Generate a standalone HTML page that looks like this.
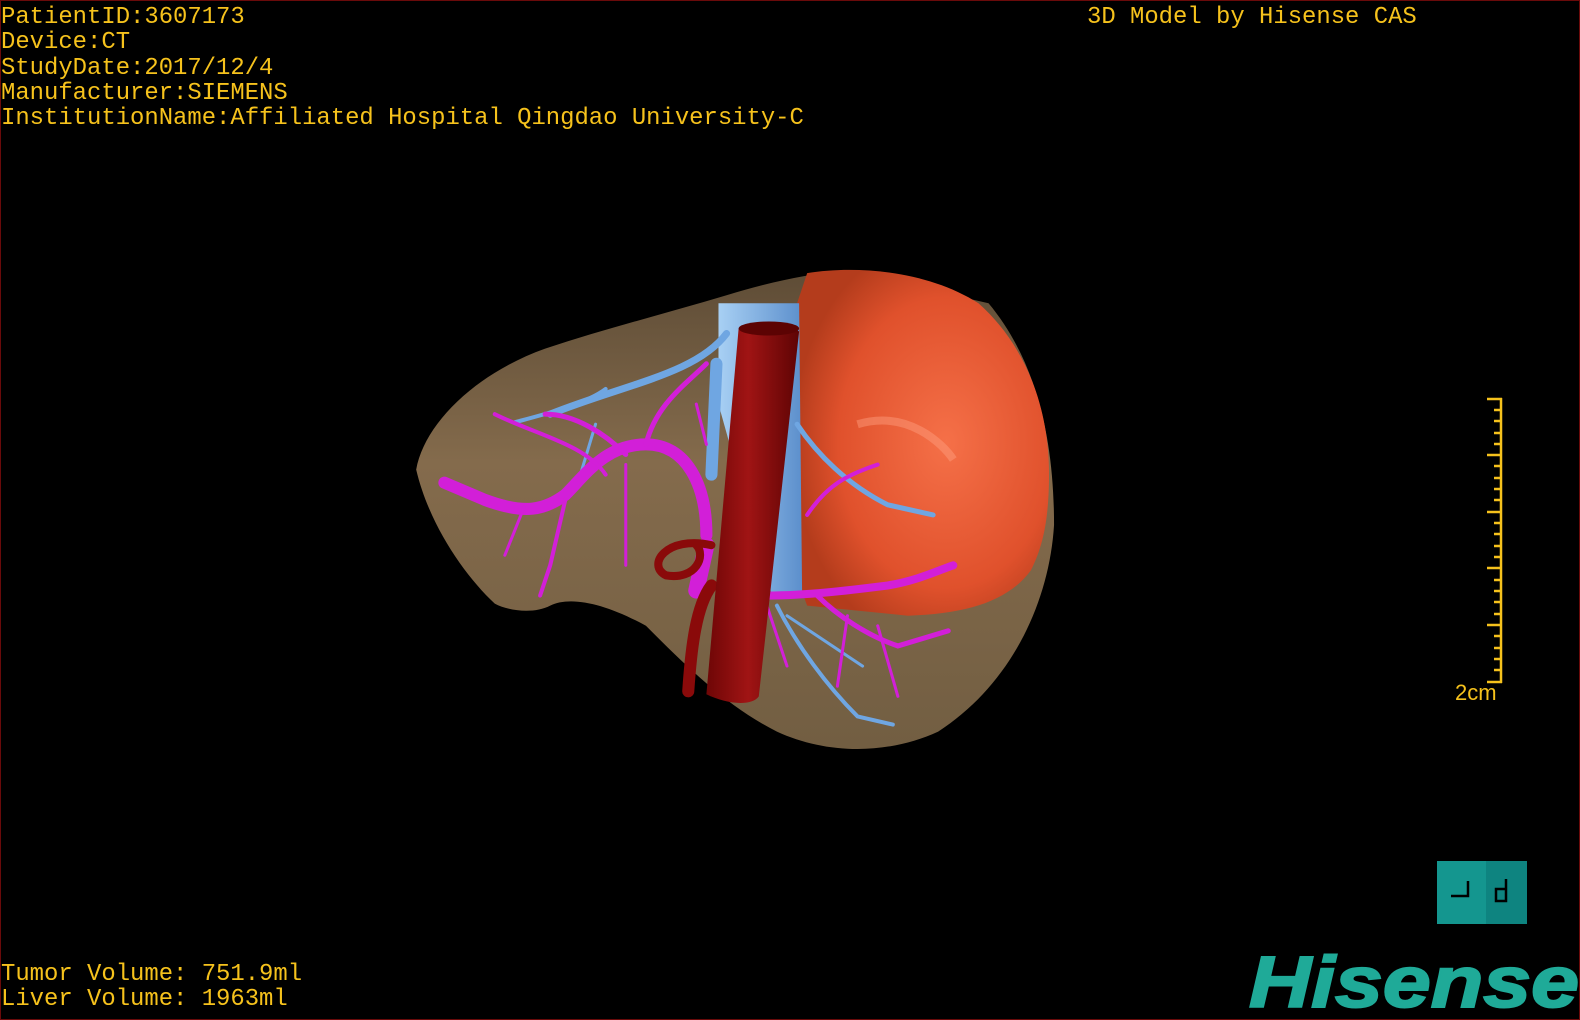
<!DOCTYPE html>
<html><head><meta charset="utf-8"><style>
html,body{margin:0;padding:0;background:#000;}
#s{position:relative;width:1580px;height:1020px;background:#000;overflow:hidden;box-sizing:border-box;border:1px solid #6a0a0a;}
.t{position:absolute;color:#f6c21c;font-family:"Liberation Mono",monospace;font-size:23.9px;line-height:25.3px;white-space:pre;letter-spacing:0;}
</style></head><body><div id="s">
<div class="t" style="left:0;top:4px">PatientID:3607173
Device:CT
StudyDate:2017/12/4
Manufacturer:SIEMENS
InstitutionName:Affiliated Hospital Qingdao University-C</div>
<div class="t" style="left:1086px;top:4px">3D Model by Hisense CAS</div>
<div class="t" style="left:0;top:961px">Tumor Volume: 751.9ml
Liver Volume: 1963ml</div>
<svg width="1580" height="1020" style="position:absolute;left:0;top:0">
<defs>
<radialGradient id="tum" cx="0.6" cy="0.5" r="0.6"><stop offset="0" stop-color="#f57048"/><stop offset="0.7" stop-color="#e0512c"/><stop offset="1" stop-color="#b43c1c"/></radialGradient>
<linearGradient id="liv" x1="0" y1="0" x2="0" y2="1"><stop offset="0" stop-color="#5e4c36"/><stop offset="0.4" stop-color="#846b4c"/><stop offset="1" stop-color="#725e42"/></linearGradient>
<linearGradient id="ivc" x1="0" y1="0" x2="1" y2="0"><stop offset="0" stop-color="#a8d0f4"/><stop offset="1" stop-color="#5c8fcc"/></linearGradient>
<linearGradient id="ao" x1="0" y1="0" x2="1" y2="0"><stop offset="0" stop-color="#6e0606"/><stop offset="0.45" stop-color="#a01414"/><stop offset="1" stop-color="#5e0404"/></linearGradient>
</defs>
<g transform="scale(1.0077)">
<path d="M412,465 C420,420 470,370 540,345 C600,325 660,310 720,292 C760,280 800,270 840,268 L980,300 C1030,360 1045,440 1045,520 C1040,600 1000,680 930,725 C880,748 820,748 770,725 C720,700 680,660 640,620 C600,598 565,590 545,600 C530,608 505,606 490,598 C460,570 425,520 412,465 Z" fill="url(#liv)"/>
<path d="M800,270 C850,262 920,268 970,300 C1015,340 1040,400 1040,470 C1040,520 1032,545 1022,565 C1000,595 960,608 900,610 L800,600 L785,560 L790,300 Z" fill="url(#tum)"/>
<path d="M850,420 C900,405 935,440 945,455" stroke="#ffa080" stroke-width="8" fill="none" opacity="0.45"/>
<path d="M712,300 L792,300 L795,590 L765,590 L712,400 Z" fill="url(#ivc)"/>
<g stroke="#6fa6e2" fill="none" stroke-linecap="round">
<path d="M720,330 C690,370 620,380 545,410" stroke-width="7"/>
<path d="M600,385 C580,400 540,410 510,418" stroke-width="4"/>
<path d="M710,360 L705,470" stroke-width="12"/>
<path d="M790,420 C810,450 840,480 880,500 L925,510" stroke-width="5"/>
<path d="M770,600 C790,640 820,680 850,710 L885,718" stroke-width="4"/>
<path d="M780,610 L855,660" stroke-width="3"/>
<path d="M590,420 L575,470" stroke-width="3"/>
</g>
<g stroke="#d21fd8" fill="none" stroke-linecap="round">
<path d="M700,530 C700,480 680,440 640,440 C600,440 580,470 560,490 C540,505 520,510 480,495 L440,478" stroke-width="12"/>
<path d="M700,540 L690,585" stroke-width="16"/>
<path d="M620,450 C600,430 570,410 540,410" stroke-width="5"/>
<path d="M640,440 C650,400 680,380 700,360" stroke-width="5"/>
<path d="M600,470 C580,440 530,430 490,410" stroke-width="4"/>
<path d="M560,495 L545,560 L535,590" stroke-width="4"/>
<path d="M520,500 L500,550" stroke-width="3"/>
<path d="M620,460 L620,560" stroke-width="3"/>
<path d="M760,590 C800,590 840,585 880,580 C910,575 930,565 945,560" stroke-width="8"/>
<path d="M810,590 C830,610 860,630 890,640 L940,625" stroke-width="5"/>
<path d="M760,600 L780,660" stroke-width="3"/>
<path d="M840,610 L830,680" stroke-width="3"/>
<path d="M870,620 L890,690" stroke-width="3"/>
<path d="M800,510 C820,480 840,470 870,460" stroke-width="4"/>
<path d="M700,440 L690,400" stroke-width="3"/>
</g>
<g stroke="#8a0a0a" fill="none" stroke-linecap="round">
<path d="M705,540 C660,530 640,560 660,570 C690,575 700,550 690,540" stroke-width="8"/>
<path d="M705,580 C690,600 685,640 682,685" stroke-width="12"/>
</g>
<path d="M732,325 C745,318 780,318 792,328 L752,690 C745,700 720,698 700,688 Z" fill="url(#ao)"/>
<ellipse cx="762" cy="325" rx="30" ry="7" fill="#5c0303"/>
</g>
<g stroke="#f6c21c" stroke-width="2.5">
<line x1="1500" y1="397" x2="1500" y2="682"/>
<line x1="1486" y1="398" x2="1501" y2="398"/><line x1="1486" y1="454" x2="1501" y2="454"/><line x1="1486" y1="511" x2="1501" y2="511"/><line x1="1486" y1="567" x2="1501" y2="567"/><line x1="1486" y1="624" x2="1501" y2="624"/><line x1="1486" y1="681" x2="1501" y2="681"/>
<line x1="1493" y1="409" x2="1501" y2="409"/><line x1="1493" y1="420" x2="1501" y2="420"/><line x1="1493" y1="432" x2="1501" y2="432"/><line x1="1493" y1="443" x2="1501" y2="443"/>
<line x1="1493" y1="465" x2="1501" y2="465"/><line x1="1493" y1="477" x2="1501" y2="477"/><line x1="1493" y1="488" x2="1501" y2="488"/><line x1="1493" y1="499" x2="1501" y2="499"/>
<line x1="1493" y1="522" x2="1501" y2="522"/><line x1="1493" y1="533" x2="1501" y2="533"/><line x1="1493" y1="545" x2="1501" y2="545"/><line x1="1493" y1="556" x2="1501" y2="556"/>
<line x1="1493" y1="579" x2="1501" y2="579"/><line x1="1493" y1="590" x2="1501" y2="590"/><line x1="1493" y1="601" x2="1501" y2="601"/><line x1="1493" y1="613" x2="1501" y2="613"/>
<line x1="1493" y1="635" x2="1501" y2="635"/><line x1="1493" y1="647" x2="1501" y2="647"/><line x1="1493" y1="658" x2="1501" y2="658"/><line x1="1493" y1="669" x2="1501" y2="669"/>
</g>
<text x="1454" y="699" fill="#f6c21c" font-family="Liberation Sans, sans-serif" font-size="22">2cm</text>
<rect x="1436" y="860" width="49" height="63" fill="#14968f"/>
<rect x="1485" y="860" width="41" height="63" fill="#0e8480"/>
<path d="M1450,895 H1467 V880" stroke="#000" stroke-width="2.5" fill="none"/>
<path d="M1505,878 V900 H1495 V888 H1505" stroke="#000" stroke-width="2.5" fill="none"/>
<text x="1248" y="1006" fill="#1faa98" stroke="#1faa98" stroke-width="2" font-family="Liberation Sans, sans-serif" font-weight="bold" font-style="italic" font-size="72" textLength="330" lengthAdjust="spacingAndGlyphs">Hisense</text>
</svg>
</div></body></html>
